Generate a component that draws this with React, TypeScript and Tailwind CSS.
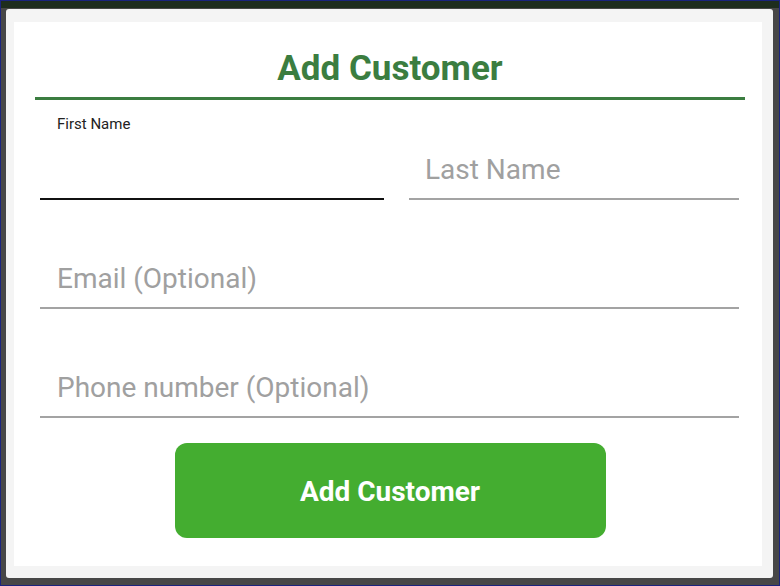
export default function App() {
  const font = { fontFamily: "Roboto, 'Liberation Sans', sans-serif" }
  return (
    <div className="w-[780px] h-[586px] border border-[#1a237e] bg-[#474747]" style={font}>
      <div className="h-full border-t-[7px] border-t-[#1e2d1e] pt-[1px] pl-[5px] pr-[6px] pb-[7px]">
        <div className="h-full bg-[#f4f4f4] rounded-[3px] pt-[13px] pl-[8px] pr-[11px] pb-[12px]">
          <div className="h-full bg-white flex flex-col">
            {/* Header */}
            <div className="pl-[21px] pr-[17px] pt-[27px]">
              <h1 className="text-center text-[35px] leading-[40px] font-bold text-[#3b7d40]">
                Add Customer
              </h1>
              <div className="mt-[8px] h-[3px] bg-[#3b7d40]" />
            </div>

            {/* Fields */}
            <div className="pl-[26px] pr-[23px]">
              <div className="flex items-end mt-[16px]">
                <div className="w-[344px]">
                  <div className="pl-[17px] text-[15px] leading-[17px] text-[#222]">First Name</div>
                  <div className="h-[67px] border-b-2 border-[#111]" />
                </div>
                <div className="flex-1 ml-[25px]">
                  <div className="pl-[16px] pt-[2px] pb-[12px] text-[28px] leading-[32px] text-[#a0a0a0] border-b-2 border-[#a3a3a3]">
                    Last Name
                  </div>
                </div>
              </div>
              <div className="mt-[61px] pl-[17px] pt-[2px] pb-[12px] text-[28px] leading-[32px] text-[#a0a0a0] border-b-2 border-[#a3a3a3]">
                Email (Optional)
              </div>
              <div className="mt-[61px] pl-[17px] pt-[2px] pb-[12px] text-[28px] leading-[32px] text-[#a0a0a0] border-b-2 border-[#a3a3a3]">
                Phone number (Optional)
              </div>
            </div>

            <div className="flex justify-center mt-[25px] pl-[4px]">
              <button className="w-[431px] h-[95px] pt-[3px] rounded-[12px] bg-[#44ad30] text-white text-[28px] font-bold">
                Add Customer
              </button>
            </div>
          </div>
        </div>
      </div>
    </div>
  )
}
